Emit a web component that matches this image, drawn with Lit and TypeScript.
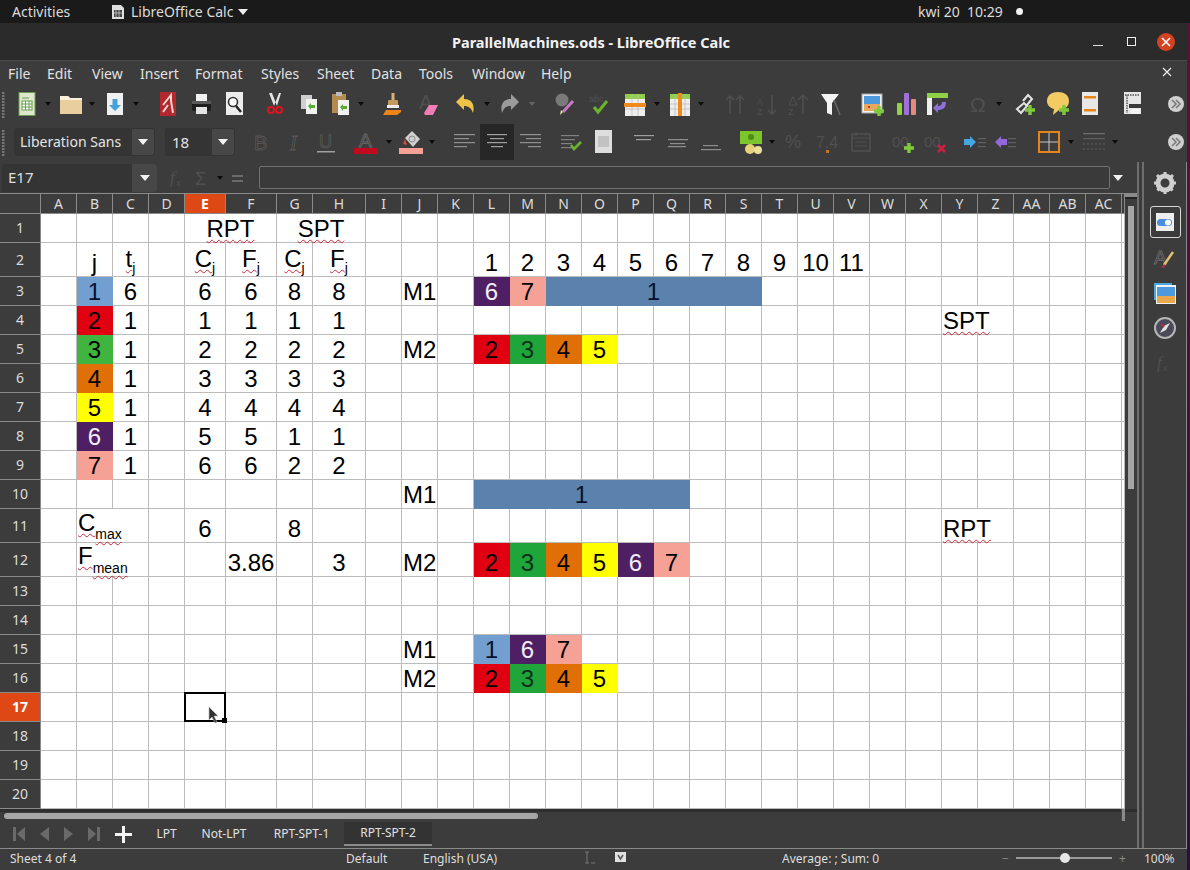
import { LitElement, html, css, svg, TemplateResult } from "lit";
import { customElement } from "lit/decorators.js";

type Cell = { t?: string; sub?: string; off?: number; bg?: string; fg?: string; span?: number; left?: boolean; wavy?: boolean; subWavy?: boolean };

const COL_NAMES = ["A","B","C","D","E","F","G","H","I","J","K","L","M","N","O","P","Q","R","S","T","U","V","W","X","Y","Z","AA","AB","AC",""];
const COL_W = [36,36,36,36,41,51,36,53,36,36,36,36,36,36,36,36,36,36,36,36,36,36,36,36,36,36,36,36,36,3];
const ROW_H = [29,34,29,29,29,29,29,29,29,29,34,34,29,29,29,29,29,29,29,29];

const BLUE = "#729fcf", RED = "#e00012", GREEN = "#3fb53f", GREEN2 = "#1fa53a", ORANGE = "#e06f06", YEL = "#ffff00", PUR = "#4f1f63", SAL = "#f5a196", STEEL = "#5b82ad";

const CELLS: Record<string, Cell> = {};
const put = (c: string, r: number, cell: Cell) => { CELLS[`${COL_NAMES.indexOf(c)},${r}`] = cell; };

put("E", 1, { t: "RPT", span: 2, wavy: true });
put("G", 1, { t: "SPT", span: 2, wavy: true });
put("B", 2, { t: "j" });
put("C", 2, { t: "t", sub: "j", off: 6, wavy: true });
for (const c of ["E", "F", "G", "H"]) put(c, 2, { t: c === "E" || c === "G" ? "C" : "F", sub: "j", off: 6, wavy: true });
[[BLUE,"1","6","6","6","8","8"],[RED,"2","1","1","1","1","1"],[GREEN,"3","1","2","2","2","2"],[ORANGE,"4","1","3","3","3","3"],[YEL,"5","1","4","4","4","4"],[PUR,"6","1","5","5","1","1"],[SAL,"7","1","6","6","2","2"]].forEach((v, i) => {
  const r = i + 3;
  put("B", r, { t: v[1], bg: v[0], fg: v[0] === PUR ? "#f2eef6" : v[0] === BLUE ? "#06122e" : "#000" });
  ["C","E","F","G","H"].forEach((c, k) => put(c, r, { t: v[k + 2] }));
});
"1 2 3 4 5 6 7 8 9 10 11".split(" ").forEach((t, i) => put(COL_NAMES[11 + i], 2, { t }));

const chip = (c: string, r: number, n: string) => {
  const bg = ({ "1": BLUE, "2": RED, "3": GREEN2, "4": ORANGE, "5": YEL, "6": PUR, "7": SAL } as Record<string, string>)[n];
  put(c, r, { t: n, bg, fg: n === "6" ? "#f2eef6" : n === "1" ? "#06122e" : n === "3" ? "#06301a" : "#000" });
};
put("J", 3, { t: "M1", left: true });
chip("L", 3, "6"); chip("M", 3, "7");
put("N", 3, { t: "1", bg: STEEL, fg: "#06122e", span: 6 });
put("Y", 4, { t: "SPT", left: true, span: 2, wavy: true });
put("J", 5, { t: "M2", left: true });
chip("L", 5, "2"); chip("M", 5, "3"); chip("N", 5, "4"); chip("O", 5, "5");
put("J", 10, { t: "M1", left: true });
put("L", 10, { t: "1", bg: STEEL, fg: "#06122e", span: 6 });
put("B", 11, { t: "C", sub: "max", off: 8, left: true, span: 2, wavy: true, subWavy: true });
put("E", 11, { t: "6" }); put("G", 11, { t: "8" });
put("Y", 11, { t: "RPT", left: true, span: 2, wavy: true });
put("B", 12, { t: "F", sub: "mean", off: 9, left: true, span: 2, wavy: true, subWavy: true });
put("F", 12, { t: "3.86" }); put("H", 12, { t: "3" });
put("J", 12, { t: "M2", left: true });
["2","3","4","5","6","7"].forEach((n, i) => chip(COL_NAMES[11 + i], 12, n));
put("J", 15, { t: "M1", left: true });
chip("L", 15, "1"); chip("M", 15, "6"); chip("N", 15, "7");
put("J", 16, { t: "M2", left: true });
chip("L", 16, "2"); chip("M", 16, "3"); chip("N", 16, "4"); chip("O", 16, "5");

const ic = (body: unknown, w = 24, h = 24) => html`<svg width=${w} height=${h} viewBox="0 0 ${w} ${h}">${body}</svg>`;
const DIM = "#505050";
const plus = (x: number, y: number, c = "#7fc93a") => svg`<path d="M${x - 1.7} ${y - 5}h3.4v3.3h3.3v3.4h-3.3v3.3h-3.4v-3.3h-3.3v-3.4h3.3z" fill=${c}/>`;
const lines = (ys: [number, number, number][], c = "#909090") => svg`${ys.map(([x, y, w]) => svg`<rect x=${x} y=${y} width=${w} height="1.2" fill=${c}/>`)}`;

const I: Record<string, () => TemplateResult> = {
  grip: () => ic(svg`<path d="M1 3v26" stroke="#777" stroke-width="3" stroke-dasharray="2 1"/>`, 4, 30),
  dd: () => ic(svg`<path d="M1 2h6l-3 4z" fill="#0c0c0c"/>`, 8, 8),
  ddDim: () => ic(svg`<path d="M1 2h6l-3 4z" fill="#666"/>`, 8, 8),
  newSheet: () => ic(svg`<rect x="4" y="0.5" width="16" height="23" fill="#dfe8cf" stroke="#6d9a52"/><rect x="7" y="9" width="10" height="9" fill="#fff" stroke="#66a048"/><path d="M7 12h10M7 15h10M10.5 9v9M14 9v9M7 6h7" stroke="#66a048"/>`),
  folder: () => ic(svg`<path d="M1 4h8l2 2h12v16H1z" fill="#e9cf9f"/><path d="M1 4h8l2 2h12v2H1z" fill="#fbf0da"/>`),
  save: () => ic(svg`<rect x="4" y="1" width="16" height="22" fill="#eef0f2"/><path d="M9.5 7h5v6h3.5l-6 6-6-6h3.5z" fill="#47a0d8"/>`),
  pdf: () => ic(svg`<rect x="4" y="0" width="16" height="24" fill="#b3272f"/><path d="M7 13L15 3v6l2 12M7 20l5-7" stroke="#f4d8d0" stroke-width="2" fill="none"/>`),
  print: () => ic(svg`<rect x="7" y="2" width="11" height="8" fill="#f2f2f2"/><rect x="3" y="9" width="19" height="10" rx="2" fill="#1d1d1d"/><rect x="3" y="9" width="19" height="3" fill="#5a5a5a"/><rect x="7" y="15" width="11" height="7" fill="#e4e4e4"/>`),
  preview: () => ic(svg`<rect x="4" y="0" width="17" height="23" fill="#ececec"/><circle cx="11" cy="10" r="4.5" fill="#fff" stroke="#333" stroke-width="1.6"/><path d="M14 14l5 6" stroke="#222" stroke-width="2.4"/>`),
  cut: () => ic(svg`<path d="M6 1l5 13h3L9 1zM18 1l-4 13h-3l5-13z" fill="#e4e4e4"/><circle cx="8" cy="18" r="3" fill="none" stroke="#e0141e" stroke-width="2"/><circle cx="16" cy="18" r="3" fill="none" stroke="#e0141e" stroke-width="2"/>`),
  copy: () => ic(svg`<rect x="5" y="3" width="11" height="14" fill="#cfcfcf"/><rect x="10" y="7" width="11" height="15" fill="#f1f1f1"/><path d="M12 14l3-3v2h4v3h-4v2z" fill="#58ae32"/>`),
  paste: () => ic(svg`<rect x="4" y="2" width="14" height="19" fill="#b58c50"/><rect x="8" y="0" width="6" height="4" fill="#bbb"/><rect x="10" y="8" width="11" height="15" fill="#f1f1f1"/><path d="M12 15l3-3v2h4v3h-4v2z" fill="#58ae32"/>`),
  clone: () => ic(svg`<rect x="10.500" y="1" width="3" height="8" fill="#d8b27a"/><rect x="7" y="8" width="10" height="6" rx="1" fill="#c49a5c"/><rect x="6" y="13" width="12" height="3" fill="#eee"/><path d="M2 23l3-5h15v2l-4 3z" fill="#ee8418"/>`),
  clear: () => ic(svg`<text x="3" y="17" font-family="Liberation Sans" font-size="20" fill="#505050">A</text><path d="M8 21l5-8h9l-5 10H9z" fill="#ef7db6"/>`),
  undo: () => ic(svg`<path d="M3 10l8-8v5c8 0 11 6 9 14-2-5-4-7-9-7v4z" fill="#eec447"/>`),
  redo: () => ic(svg`<path d="M21 10l-8-8v5C5 7 2 13 4 21c2-5 4-7 9-7v4z" fill="#9b9b9b"/>`),
  find: () => ic(svg`<circle cx="9" cy="8" r="6.500" fill="#7a7a7a"/><path d="M10 20L20 9" stroke="#c878c8" stroke-width="3"/><path d="M7 23l3-3-2-2z" fill="#dbe89a"/>`),
  spell: () => ic(svg`<text x="1" y="10" font-family="Liberation Sans" font-size="9" fill="#505050">abc</text><path d="M6 15l4 5 9-11" stroke="#6cb32e" stroke-width="3" fill="none"/>`),
  rows: () => ic(svg`<rect x="2" y="2" width="20" height="22" fill="#eee"/><rect x="2" y="2" width="20" height="5" fill="#8fd048"/><path d="M2 12h20M2 17h20M9 2v22M15 2v22" stroke="#bbb" stroke-width=".8"/><rect x="1" y="11" width="22" height="4" fill="#ef8a1c"/>`),
  cols: () => ic(svg`<rect x="2" y="2" width="20" height="22" fill="#eee"/><rect x="2" y="2" width="20" height="5" fill="#8fd048"/><path d="M2 12h20M2 17h20M7 2v22M17 2v22" stroke="#bbb" stroke-width=".8"/><rect x="10" y="1" width="4" height="23" fill="#ef8a1c"/>`),
  sort: () => ic(svg`<path d="M7 22V4M3 8l4-4 4 4M17 22V4M13 8l4-4 4 4" stroke=${DIM} stroke-width="1.5" fill="none"/>`),
  sortA: () => ic(svg`<text x="1" y="13" font-family="Liberation Sans" font-size="9" fill=${DIM}>A</text><text x="1" y="23" font-family="Liberation Sans" font-size="9" fill=${DIM}>Z</text><path d="M16 22V3M12 18l4 4 4-4" stroke=${DIM} stroke-width="1.5" fill="none"/>`),
  sortZ: () => ic(svg`<text x="1" y="23" font-family="Liberation Sans" font-size="9" fill=${DIM}>Z</text><path d="M2 13l4-8 4 8z" fill="none" stroke=${DIM}/><path d="M16 22V3M11 8l5-5 5 5" stroke=${DIM} stroke-width="1.5" fill="none"/>`),
  filter: () => ic(svg`<path d="M2 2h18l-7 9v12l-5-2V11z" fill="#f4f4f4"/><path d="M15 8l6 15" stroke="#666" stroke-width="1.5"/>`),
  image: () => ic(svg`<rect x="1" y="2" width="20" height="19" fill="#eef2f6" stroke="#aaa"/><rect x="3" y="4" width="16" height="8" fill="#4c9adb"/><rect x="3" y="12" width="16" height="7" fill="#e6a85c"/><rect x="7" y="14" width="2" height="2" fill="#d8341c"/>${plus(18, 19)}`),
  chart: () => ic(svg`<rect x="2" y="11" width="5" height="12" rx="1" fill="#8ed53f"/><rect x="9" y="1" width="5" height="22" rx="1" fill="#a06fd8"/><rect x="16" y="7" width="5" height="16" rx="1" fill="#e48a80"/>`),
  pivot: () => ic(svg`<rect x="1" y="1" width="21" height="22" fill="#3c3c3c"/><rect x="1" y="1" width="21" height="5" fill="#8fd048"/><rect x="1" y="6" width="5" height="17" fill="#eee"/><path d="M20 10c0 6-3 8-8 8v3l-5-5 5-5v3c3 0 4-2 4-4z" fill="#8f6fd8"/>`),
  special: () => ic(svg`<text x="3" y="20" font-family="Liberation Sans" font-size="21" fill=${DIM}>Ω</text>`),
  link: () => ic(svg`<path d="M4 17l4 4 6-7-3-3zM10 9l5-6 4 4-5 6" fill="none" stroke="#e4e4e4" stroke-width="2"/>${plus(17, 18)}`),
  comment: () => ic(svg`<path d="M1 9c0-6 5-9 11-9s11 3 11 9-5 9-10 9l-6 5 1-6c-4-1-7-4-7-8z" fill="#f2cb62"/>${plus(18, 18)}`),
  header: () => ic(svg`<rect x="3" y="0" width="16" height="23" fill="#e8e8e8"/><rect x="5" y="4" width="12" height="2.500" fill="#e8851a"/><rect x="5" y="17" width="12" height="2.500" fill="#e8851a"/>`),
  range: () => ic(svg`<rect x="4" y="0" width="17" height="22" fill="#e6e6e6"/><path d="M5 3h15M7 3v18" stroke="#777" stroke-dasharray="1.500 1" stroke-width="2"/><rect x="9" y="12" width="13" height="4" fill="#3a3a3a"/><rect x="11" y="17" width="9" height="5" fill="#f4f4f4"/>`),
  chev: () => ic(svg`<circle cx="9" cy="9" r="8" fill="#cfcfcf"/><path d="M5 5l4 4-4 4M9 5l4 4-4 4" stroke="#777" stroke-width="1.500" fill="none"/>`, 18, 18),

  bold: () => ic(svg`<text x="5" y="20" font-family="Liberation Sans" font-size="20" fill="#3a3a3a" stroke="#585858" stroke-width=".8">B</text>`),
  ital: () => ic(svg`<text x="8" y="20" font-family="Liberation Serif" font-style="italic" font-size="20" fill="#3a3a3a" stroke="#585858" stroke-width=".8">I</text>`),
  under: () => ic(svg`<text x="5" y="18" font-family="Liberation Sans" font-size="18" fill="#3a3a3a" stroke="#585858" stroke-width=".8">U</text><rect x="3" y="21" width="18" height="1.500" fill="#a0a0a0"/>`),
  fontColor: () => ic(svg`<text x="5" y="17" font-family="Liberation Sans" font-size="19" fill="#3a3a3a" stroke="#6a6a6a" stroke-width=".8">A</text><rect x="0" y="18" width="24" height="6" fill="#c00a1e"/>`),
  bgColor: () => ic(svg`<path d="M6 8l7-7 8 8-7 8z" fill="#d0d0d0"/><circle cx="13" cy="9" r="3" fill="none" stroke="#888"/><path d="M4 14l2-5 2 6z" fill="#d84c30"/><rect x="0" y="18" width="24" height="6" fill="#f5a196"/>`),
  aLeft: () => ic(lines([[3,4,21],[3,8,15],[3,12,21],[3,16,13]])),
  aCenter: () => ic(lines([[2,4,20],[5,8,14],[2,12,20],[6,16,12]], "#a0a0a0")),
  aRight: () => ic(lines([[1,4,21],[7,8,15],[1,12,21],[9,16,13]])),
  wrap: () => ic(svg`${lines([[2,5,18],[2,9,14],[2,13,11],[2,17,11]], "#808080")}<path d="M12 15l3 4 7-7" stroke="#6cb32e" stroke-width="2.500" fill="none"/>`),
  merge: () => ic(svg`<rect x="4" y="0" width="17" height="23" fill="#dedede"/><rect x="7" y="6" width="11" height="11" fill="#c2c2c2"/>`),
  vTop: () => ic(lines([[2,5,20],[4,9,15]], "#a0a0a0")),
  vMid: () => ic(lines([[2,9,20],[4,13,15],[2,16,18]], "#8e8e8e")),
  vBot: () => ic(lines([[4,15,15],[2,19,20]], "#8e8e8e")),
  money: () => ic(svg`<rect x="0" y="1" width="22" height="13" fill="#7cc52c"/><circle cx="11" cy="7" r="3" fill="#4d8d18"/><ellipse cx="10" cy="19" rx="5" ry="5" fill="#e8d278"/><ellipse cx="18" cy="20" rx="4" ry="4" fill="#ecdf9c"/>`),
  pct: () => ic(svg`<text x="1" y="18" font-family="Liberation Sans" font-size="18" fill=${DIM}>%</text>`),
  num: () => ic(svg`<text x="0" y="18" font-family="Liberation Sans" font-size="16" fill=${DIM}>7.4</text><rect x="10" y="20" width="3" height="3" fill="#c8741c"/>`),
  date: () => ic(svg`<rect x="3" y="4" width="18" height="17" fill="none" stroke=${DIM} stroke-width="1.500"/><path d="M3 8h18M6 12h12M6 16h12M7 2v4M17 2v4" stroke=${DIM}/>`),
  decAdd: () => ic(svg`<text x="0" y="17" font-family="Liberation Sans" font-size="15" fill=${DIM}>00</text>${plus(17, 18)}`),
  decDel: () => ic(svg`<text x="0" y="17" font-family="Liberation Sans" font-size="15" fill=${DIM}>00</text><path d="M14 15l7 7M21 15l-7 7" stroke="#c82040" stroke-width="2.500"/>`),
  ind: () => ic(svg`<path d="M1 9h6V6l6 6-6 6v-3H1z" fill="#45a6e0"/>${lines([[15,8,8],[15,12,8],[15,16,8]], "#606060")}`),
  out: () => ic(svg`<path d="M14 9H8V6l-6 6 6 6v-3h6z" fill="#9468d8"/>${lines([[15,8,8],[15,12,8],[15,16,8]], "#606060")}`),
  borders: () => ic(svg`<rect x="2" y="2" width="20" height="20" fill="none" stroke="#e8851a" stroke-width="2"/><path d="M12 3v18M3 12h18" stroke="#c8c8c8"/>`),
  bStyle: () => ic(svg`${lines([[1,3,22]], "#707070")}${lines([[1,8,22]], "#606060")}<path d="M1 14h22M1 19h22" stroke="#606060" stroke-dasharray="2 2"/>`),

  gear: () => ic(svg`<circle cx="12" cy="12" r="7" fill="none" stroke="#cfcfcf" stroke-width="5"/><path d="M12 1v22M1 12h22M4 4l16 16M20 4L4 20" stroke="#cfcfcf" stroke-width="3" stroke-dasharray="3 16" stroke-dashoffset="0"/>`),
  prop: () => ic(svg`<rect x="2" y="2" width="18" height="18" fill="#eeeeee"/><rect x="3" y="8" width="15" height="7" rx="3.500" fill="#4a8ee0"/><circle cx="14" cy="11.500" r="3" fill="#fff"/>`, 22, 22),
  styles: () => ic(svg`<text x="1" y="18" font-family="Liberation Sans" font-size="19" fill="#3a3a3a" stroke="#6a6a6a" stroke-width=".8">A</text><path d="M11 19l9-13" stroke="#e0c070" stroke-width="2.500"/><path d="M8 21l4-3-1 4z" fill="#c02838"/>`),
  gallery: () => ic(svg`<rect x="1" y="2" width="18" height="17" fill="#4aa8e0"/><rect x="3" y="4" width="20" height="19" fill="#f2f2f2"/><rect x="4" y="6" width="18" height="9" fill="#4c9adb"/><rect x="4" y="15" width="18" height="7" fill="#eaa84c"/>`),
  nav: () => ic(svg`<circle cx="12" cy="12" r="10" fill="#4a4a5a" stroke="#b5b5b5" stroke-width="2"/><path d="M17 7l-4 7-6 3 4-7z" fill="#e4e4e4"/><path d="M8 8l3 3" stroke="#c02838" stroke-width="2"/>`),
  fxDim: () => ic(svg`<text x="4" y="17" font-family="Liberation Serif" font-style="italic" font-size="17" fill="#505050">f</text><text x="10" y="20" font-family="Liberation Sans" font-size="9" fill="#505050">x</text>`),
  sigma: () => ic(svg`<text x="4" y="19" font-family="Liberation Sans" font-size="18" fill="#505050">Σ</text>`),
  eq: () => ic(svg`<path d="M6 10h11M6 15h11" stroke="#7a7a7a" stroke-width="1.500"/>`),
  doc: () => ic(svg`<path d="M2 0h9l3 3v11H2z" fill="#dedede"/><path d="M4 5h8v7H4z" fill="#444"/><path d="M6 5v7M9 5v7M4 8h8" stroke="#ddd" stroke-width=".7"/>`, 14, 14),
};

type Item = [number, string, number?];
const placed = (start: number, items: (Item | [number, number, TemplateResult])[]) => {
  let cur = start;
  return items.map((it) => {
    const cx = it[0];
    let w: number, body: TemplateResult;
    if (typeof it[1] === "number") { w = it[1]; body = it[2] as TemplateResult; }
    else { w = it[1] === "dd" || it[1] === "ddDim" ? 8 : it[1] === "grip" ? 4 : it[1] === "chev" ? 18 : 24; body = I[it[1]](); }
    const ml = cx - w / 2 - cur;
    cur = cx + w / 2;
    return html`<span class="ti" style="margin-left:${ml}px;width:${w}px">${body}</span>`;
  });
};

const MENU = [["File", 8], ["Edit", 47], ["View", 92], ["Insert", 140], ["Format", 195], ["Styles", 261], ["Sheet", 317], ["Data", 371], ["Tools", 419], ["Window", 472], ["Help", 541]] as [string, number][];

const TB1: Item[] = [[4,"grip"],[27,"newSheet"],[48,"dd"],[71,"folder"],[92,"dd"],[115,"save"],[136,"dd"],[168,"pdf"],[201,"print"],[234,"preview"],[275,"cut"],[308,"copy"],[340,"paste"],[361,"dd"],[393,"clone"],[428,"clear"],[465,"undo"],[487,"dd"],[510,"redo"],[532,"ddDim"],[565,"find"],[600,"spell"],[635,"rows"],[657,"dd"],[680,"cols"],[701,"dd"],[735,"sort"],[768,"sortA"],[799,"sortZ"],[831,"filter"],[873,"image"],[907,"chart"],[938,"pivot"],[979,"special"],[999,"dd"],[1025,"link"],[1058,"comment"],[1091,"header"],[1132,"range"],[1176,"chev"]];

const combo = (text: string, cls: string) => html`<span class="combo ${cls}"><span class="val">${text}</span><span class="btn"><i class="tri"></i></span></span>`;

const TB2: (Item | [number, number, TemplateResult])[] = [[4,"grip"],[84.5,141,combo("Liberation Sans", "font")],[200,70,combo("18", "size")],[261,"bold"],[294,"ital"],[326,"under"],[366,"fontColor"],[389,"dd"],[411,"bgColor"],[432,"dd"],[463,"aLeft"],[497,34,html`<span class="active">${I.aCenter()}</span>`],[531,"aRight"],[571,"wrap"],[603,"merge"],[644,"vTop"],[678,"vMid"],[711,"vBot"],[752,"money"],[772,"dd"],[796,"pct"],[828,"num"],[861,"date"],[904,"decAdd"],[936,"decDel"],[975,"ind"],[1005,"out"],[1049,"borders"],[1071,"dd"],[1094,"bStyle"],[1115,"dd"],[1176,"chev"]];

@customElement("app-root")
export class AppRoot extends LitElement {
  static styles = css`
    :host { display: block; width: 1190px; height: 870px; overflow: hidden; position: relative; font-family: "Noto Sans", "Open Sans", sans-serif; color: #dedede; background: linear-gradient(#5c1238, #2a0f3e); }
    * { box-sizing: border-box; }
    svg { display: block; flex: none; }
    .top { height: 23px; background: #1a1a1a; display: flex; align-items: center; font-size: 14px; color: #dcdcdc; white-space: nowrap; }
    .act { margin-left: 12px; width: 98px; }
    .appn { display: flex; align-items: center; gap: 7px; width: 808px; }
    .caret { width: 0; height: 0; border-left: 5px solid transparent; border-right: 5px solid transparent; border-top: 6px solid #eee; margin-left: -2px; }
    .clock { width: 98px; }
    .dot { width: 7px; height: 7px; border-radius: 50%; background: #f4f4f4; }
    .win { width: 1187px; height: 847px; display: flex; flex-direction: column; background: #3c3c3c; }
    .title { height: 37px; background: #2b2b2b; display: flex; align-items: center; position: relative; justify-content: center; font-size: 14.5px; font-weight: 700; color: #f2f2f2; padding-right: 5px; }
    .wc { position: absolute; right: 0; top: 0; bottom: 0; display: flex; align-items: center; }
    .mini { width: 10px; height: 1.5px; background: #ddd; margin: 8px 24px 0 0; }
    .maxi { width: 9px; height: 9px; border: 1.5px solid #eee; margin-right: 21px; }
    .close { width: 18px; height: 18px; border-radius: 50%; background: #d5421f; color: #fff; display: flex; align-items: center; justify-content: center; margin-right: 12px; }
    .menu { height: 26px; display: flex; align-items: center; font-size: 14px; color: #e2e2e2; border-top: 1px solid #4a4a4a; position: relative; }
    .mi { display: block; white-space: nowrap; }
    .menux { position: absolute; right: 15px; top: 6px; }
    .tb { display: flex; align-items: center; position: relative; }
    .tb1 { height: 36px; }
    .tb2 { height: 40px; }
    .ti { display: flex; align-items: center; justify-content: center; flex: none; }
    .combo { display: flex; height: 28px; width: 100%; border-radius: 3px; background: #343434; font-size: 15px; color: #e4e4e4; overflow: hidden; border: 1px solid #333; }
    .val { flex: 1; padding-left: 5px; line-height: 26px; overflow: hidden; white-space: nowrap; min-width: 0; }
    .font .val { margin-right: 8px; font-size: 14px; }
    .size .val { padding-left: 6px; }
    .btn { width: 22px; background: #474747; display: flex; align-items: center; justify-content: center; flex: none; }
    .tri { display: block; width: 0; height: 0; border-left: 5.5px solid transparent; border-right: 5.500px solid transparent; border-top: 6px solid #f2f2f2; }
    .active { width: 34px; height: 36px; background: #272727; display: flex; align-items: center; justify-content: center; }
    .body { flex: 1; display: flex; min-height: 0; }
    .main { width: 1137px; display: flex; flex-direction: column; }
    .fx { height: 32px; display: flex; align-items: center; border-bottom: 1px solid #8a8a8a; position: relative; }
    .namebox { display: flex; width: 155px; height: 28px; margin-left: 2px; border-radius: 3px; background: #343434; font-size: 15px; overflow: hidden; flex: none; }
    .namebox .val { padding-left: 6px; line-height: 26px; }
    .fxicons { display: flex; align-items: center; flex: none; margin-left: 9px; }
    .sigma { margin-left: 1px; }
    .fxdd { margin-left: 1px; }
    .eqb { margin-left: 2px; }
    .input { width: 851px; height: 23px; border: 1px solid #707070; border-radius: 2px; margin-left: 9px; flex: none; background: #3a3a3a; }
    .fx .after { padding: 0 3px; }
    .sheetwrap { display: flex; flex: none; }
    .grid { display: grid; width: 1125px; font-family: "Liberation Sans", sans-serif; font-size: 24px; line-height: 26px; color: #000; background: #fff; position: relative; }
    .corner, .ch, .rh { background: #3c3c3c; color: #dcdcdc; font-family: "Noto Sans", sans-serif; font-size: 14px; line-height: 18px; display: flex; align-items: center; justify-content: center; border-right: 1px solid #8a8a8a; border-bottom: 1px solid #8a8a8a; }
    .ch.on, .rh.on { background: #dd4814; color: #fff; font-weight: 700; }
    .c { border-right: 1px solid #bcbcbc; border-bottom: 1px solid #bcbcbc; display: flex; align-items: flex-end; justify-content: center; white-space: nowrap; min-width: 0; position: relative; }
    .c.left { justify-content: flex-start; padding-left: 1px; }
    .c.fill { border-color: transparent; }
    .w { text-decoration: underline wavy #c8283c 1.3px; text-underline-offset: 2px; text-decoration-skip-ink: none; }
    .sub { font-size: 14px; line-height: 16px; position: relative; display: inline-block; vertical-align: var(--off); }
    .sel { position: absolute; inset: -1px -1px -1px -1px; border: 2px solid #000; z-index: 2; }
    .sel::after { content: ""; position: absolute; right: -3px; bottom: -3px; width: 5px; height: 5px; background: #000; }
    .cursor { position: absolute; left: 23px; top: 13px; z-index: 3; }
    .vs { width: 12px; background: #3c3c3c; position: relative; flex: none; }
    .vs .cap { height: 5px; background: #8a8a8a; margin: 0; border-bottom: 2px solid #222; }
    .vs .thumb { width: 6px; height: 283px; margin: 7px 0 0 3px; background: #a6a6a6; }
    .hs { height: 13px; background: #3c3c3c; box-shadow: inset 0 3px 0 #2e2e2e; padding: 4px 0 0 4px; position: relative; }
    .hs .thumb { width: 534px; height: 6px; background: #a6a6a6; border-radius: 3px; }
    .hs .mark { position: absolute; left: 1121px; top: 0; width: 4px; height: 12px; background: #8a8a8a; border-left: 1px solid #444; }
    .tabs { height: 24px; display: flex; align-items: stretch; font-size: 12px; color: #e2e2e2; }
    .nav { display: flex; align-items: center; flex: none; width: 112px; padding-left: 13px; gap: 13px; }
    .add { width: 32px; padding-left: 3px; display: flex; align-items: center; justify-content: flex-start; }
    .tab { display: flex; align-items: center; justify-content: center; padding-bottom: 2px; }
    .tab.on { background: #333; border-bottom: 2px solid #8a8a8a; }
    .handle { width: 7px; flex: none; border-left: 2px solid #6e6e6e; border-right: 2px solid #6e6e6e; }
    .side { flex: 1; border-right: 1px solid #8a8a8a; display: flex; flex-direction: column; align-items: center; padding-top: 6px; }
    .side .sb { width: 30px; height: 30px; display: flex; align-items: center; justify-content: center; margin-bottom: 5px; flex: none; }
    .side .sb.gear { margin-bottom: 8px; }
    .side .sb.on { width: 31px; height: 32px; border: 1px solid #d8d8d8; border-radius: 3px; }
    .status { height: 22px; padding-bottom: 3px; border-top: 1px solid #8a8a8a; display: grid; grid-template-columns: 346px 77px 160px 32px 167px 220px 142px 1fr; align-items: center; font-size: 12px; color: #dedede; white-space: nowrap; }
    .status span:first-child { padding-left: 10px; }
    .slider { display: flex; align-items: center; gap: 4px; color: #888; }
    .track { width: 96px; height: 2px; background: #9a9a9a; position: relative; margin: 0 3px; }
    .knob { position: absolute; left: 44px; top: -4px; width: 10px; height: 10px; border-radius: 50%; background: #e6e6e6; }
  `;

  private cell(ci: number, r: number, covered: Set<string>) {
    const key = `${ci},${r}`;
    if (covered.has(key)) return null;
    const d = CELLS[key];
    const sel = ci === 4 && r === 17;
    if (d?.span) for (let k = 1; k < d.span; k++) covered.add(`${ci + k},${r}`);
    const style = [d?.span ? `grid-column:span ${d.span}` : "", d?.bg ? `background:${d.bg}` : "", d?.fg ? `color:${d.fg}` : ""].join(";");
    return html`<div class="c ${d?.left ? "left" : ""} ${d?.bg ? "fill" : ""}" style=${style}>
      ${d?.t ? html`<span><span class=${d.wavy ? "w" : ""}>${d.t}</span>${d.sub ? html`<span class="sub ${d.subWavy ? "w" : ""}" style="--off:-${d.off}px">${d.sub}</span>` : null}</span>` : null}
      ${sel ? html`<div class="sel"></div><svg class="cursor" width="12" height="18" viewBox="0 0 12 18"><path d="M1 1v13l3-3 3 6 2-1-3-6h4z" fill="#333" stroke="#bbb" stroke-width=".6"/></svg>` : null}
    </div>`;
  }

  render() {
    const covered = new Set<string>();
    return html`
      <div class="top">
        <span class="act">Activities</span>
        <span class="appn">${I.doc()}<span>LibreOffice Calc</span><i class="caret"></i></span>
        <span class="clock">kwi 20&nbsp; 10:29</span>
        <i class="dot"></i>
      </div>
      <div class="win">
        <div class="title">ParallelMachines.ods - LibreOffice Calc
          <div class="wc"><i class="mini"></i><i class="maxi"></i><span class="close">${ic(svg`<path d="M1 1l8 8M9 1l-8 8" stroke="#fff" stroke-width="1.6"/>`, 10, 10)}</span></div>
        </div>
        <div class="menu">
          ${MENU.map(([t, x], i) => html`<span class="mi" style="margin-left:${i ? 0 : x}px;width:${(MENU[i + 1]?.[1] ?? x + 40) - x}px">${t}</span>`)}
          <span class="menux">${ic(svg`<path d="M1 1l8 8M9 1l-8 8" stroke="#eee" stroke-width="1.2"/>`, 10, 10)}</span>
        </div>
        <div class="tb tb1">${placed(0, TB1)}</div>
        <div class="tb tb2">${placed(0, TB2)}</div>
        <div class="body">
          <div class="main">
            <div class="fx">
              <div class="namebox"><span class="val">E17</span><span class="btn" style="width:25px"><i class="tri"></i></span></div>
              <div class="fxicons">${I.fxDim()}<span class="sigma">${I.sigma()}</span><span class="fxdd">${I.dd()}</span><span class="eqb">${I.eq()}</span></div>
              <div class="input"></div>
              <span class="after"><i class="tri"></i></span>
            </div>
            <div class="sheetwrap">
              <div class="grid" style="grid-template-columns:41px ${COL_W.map((w) => w + "px").join(" ")};grid-template-rows:20px ${ROW_H.map((h) => h + "px").join(" ")}">
                <div class="corner"></div>
                ${COL_NAMES.map((n, i) => html`<div class="ch ${i === 4 ? "on" : ""}">${n}</div>`)}
                ${ROW_H.map((_, ri) => html`
                  <div class="rh ${ri === 16 ? "on" : ""}">${ri + 1}</div>
                  ${COL_NAMES.map((_n, ci) => this.cell(ci, ri + 1, covered))}
                `)}
              </div>
              <div class="vs"><div class="cap"></div><div class="thumb"></div></div>
            </div>
            <div class="hs"><div class="thumb"></div><div class="mark"></div></div>
            <div class="tabs">
              <div class="nav">
                ${ic(svg`<path d="M0 0h3v14H0zM12 0v14L4 7z" fill="#6a6a6a"/>`, 12, 14)}
                ${ic(svg`<path d="M11 0v14L2 7z" fill="#6a6a6a"/>`, 12, 14)}
                ${ic(svg`<path d="M1 0v14l9-7z" fill="#6a6a6a"/>`, 12, 14)}
                ${ic(svg`<path d="M9 0h3v14H9zM0 0v14l8-7z" fill="#6a6a6a"/>`, 12, 14)}
              </div>
              <div class="add">${ic(svg`<path d="M7 0h3v7h7v3h-7v7H7v-7H0V7h7z" fill="#f4f4f4"/>`, 17, 17)}</div>
              <div class="tab" style="width:45px">LPT</div>
              <div class="tab" style="width:70px">Not-LPT</div>
              <div class="tab" style="width:85px">RPT-SPT-1</div>
              <div class="tab on" style="width:88px">RPT-SPT-2</div>
            </div>
          </div>
          <div class="handle"></div>
          <div class="side">
            <span class="sb gear">${I.gear()}</span>
            <span class="sb on">${I.prop()}</span>
            <span class="sb">${I.styles()}</span>
            <span class="sb">${I.gallery()}</span>
            <span class="sb">${I.nav()}</span>
            <span class="sb">${I.fxDim()}</span>
          </div>
        </div>
        <div class="status">
          <span>Sheet 4 of 4</span>
          <span>Default</span>
          <span>English (USA)</span>
          <span>${ic(svg`<path d="M2 1h4M4 1v11M2 12h4M8 12h4" stroke="#777"/>`, 14, 14)}</span>
          <span>${ic(svg`<rect x="0" y="0" width="11" height="10" fill="#e0e0e0"/><path d="M3 3l2.500 4L8 3" stroke="#555" stroke-width="1.500" fill="none"/>`, 12, 12)}</span>
          <span>Average: ; Sum: 0</span>
          <span class="slider">−<span class="track"><i class="knob"></i></span>+</span>
          <span>100%</span>
        </div>
      </div>
    `;
  }
}
